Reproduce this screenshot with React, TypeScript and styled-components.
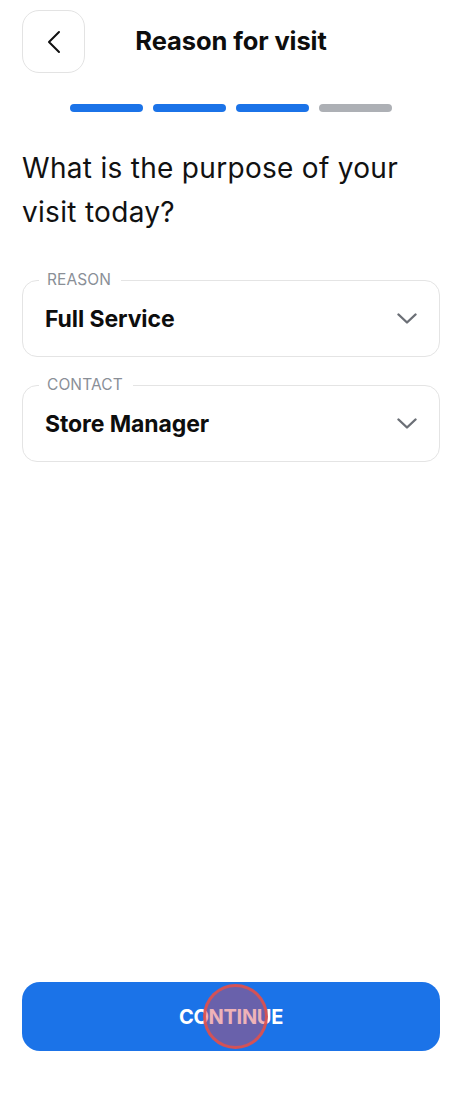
import React from 'react';
import styled, { createGlobalStyle } from 'styled-components';

const GlobalStyle = createGlobalStyle`
  html, body {
    margin: 0;
    padding: 0;
    background: #ffffff;
  }
  body {
    font-family: Inter, 'Noto Sans', sans-serif;
    color: #111111;
  }
`;

const Screen = styled.div`
  width: 462px;
  height: 1120px;
  box-sizing: border-box;
  padding: 10px 22px 0;
  display: flex;
  flex-direction: column;
`;

const Header = styled.header`
  display: flex;
  align-items: center;
  height: 63px;
`;

const BackButton = styled.button`
  width: 63px;
  height: 63px;
  box-sizing: border-box;
  border: 1.5px solid #e3e3e3;
  border-radius: 17px;
  background: #ffffff;
  display: flex;
  align-items: center;
  justify-content: center;
  padding: 0;
  cursor: pointer;
`;

const Title = styled.h1`
  flex: 1;
  margin: -3px 63px 0 0;
  text-align: center;
  font-size: 25.5px;
  font-weight: 700;
  letter-spacing: -0.1px;
  color: #0d0d0d;
`;

const Progress = styled.div`
  display: flex;
  justify-content: center;
  gap: 10px;
  margin-top: 31px;
`;

const Segment = styled.div<{ $done: boolean }>`
  width: 73px;
  height: 8px;
  border-radius: 4px;
  background: ${({ $done }) => ($done ? '#1b73e8' : '#adb0b5')};
`;

const Question = styled.h2`
  margin: 34px 0 0;
  font-size: 28px;
  font-weight: 400;
  line-height: 44px;
  letter-spacing: 0.3px;
  color: #111111;
`;

const Fields = styled.div`
  display: flex;
  flex-direction: column;
  gap: 28px;
  margin-top: 46px;
`;

const FieldBox = styled.div`
  position: relative;
  height: 77px;
  box-sizing: border-box;
  border: 1.5px solid #e4e4e4;
  border-radius: 15px;
  padding: 0 22px 0 22px;
  display: flex;
  align-items: center;
  justify-content: space-between;
`;

const Label = styled.span`
  position: absolute;
  left: 16px;
  top: -11px;
  padding: 0 10px 0 8px;
  background: #ffffff;
  font-size: 15.5px;
  line-height: 20px;
  font-weight: 400;
  color: #8a8f97;
  letter-spacing: 0.1px;
`;

const FieldValue = styled.span`
  margin-top: 1px;
  font-size: 23px;
  font-weight: 700;
  color: #0d0d0d;
  letter-spacing: -0.1px;
`;

const Spacer = styled.div`
  flex: 1;
`;

const ContinueButton = styled.button`
  position: relative;
  width: 100%;
  height: 69px;
  border: none;
  border-radius: 18px;
  background: #1b73e8;
  color: #ffffff;
  font-family: Inter, 'Noto Sans', sans-serif;
  font-size: 20px;
  font-weight: 700;
  letter-spacing: -0.3px;
  margin-bottom: 69px;
  cursor: pointer;
`;

const TouchDot = styled.span`
  position: absolute;
  left: 181px;
  top: 2px;
  width: 65px;
  height: 65px;
  box-sizing: border-box;
  border-radius: 50%;
  border: 3px solid rgba(222, 80, 78, 0.9);
  background: rgba(215, 75, 85, 0.42);
  pointer-events: none;
`;

const BackIcon = () => (
  <svg width="14" height="24" viewBox="0 0 14 24" fill="none">
    <path d="M12 2 L2 12 L12 22" stroke="#111" strokeWidth="2" strokeLinecap="round" strokeLinejoin="round" />
  </svg>
);

const Chevron = () => (
  <svg width="20" height="11" viewBox="0 0 20 11" fill="none">
    <path d="M1.5 1.5 L10 9.5 L18.5 1.5" stroke="#6b6f76" strokeWidth="2.4" strokeLinecap="round" strokeLinejoin="round" />
  </svg>
);

const SelectField: React.FC<{ label: string; value: string }> = ({ label, value }) => (
  <FieldBox>
    <Label>{label}</Label>
    <FieldValue>{value}</FieldValue>
    <Chevron />
  </FieldBox>
);

const steps = [true, true, true, false];

export default function App() {
  return (
    <>
      <GlobalStyle />
      <Screen>
        <Header>
          <BackButton aria-label="Back">
            <BackIcon />
          </BackButton>
          <Title>Reason for visit</Title>
        </Header>
        <Progress>
          {steps.map((done, i) => (
            <Segment key={i} $done={done} />
          ))}
        </Progress>
        <Question>
          What is the purpose of your
          <br />
          visit today?
        </Question>
        <Fields>
          <SelectField label="REASON" value="Full Service" />
          <SelectField label="CONTACT" value="Store Manager" />
        </Fields>
        <Spacer />
        <ContinueButton>
          CONTINUE
          <TouchDot />
        </ContinueButton>
      </Screen>
    </>
  );
}
